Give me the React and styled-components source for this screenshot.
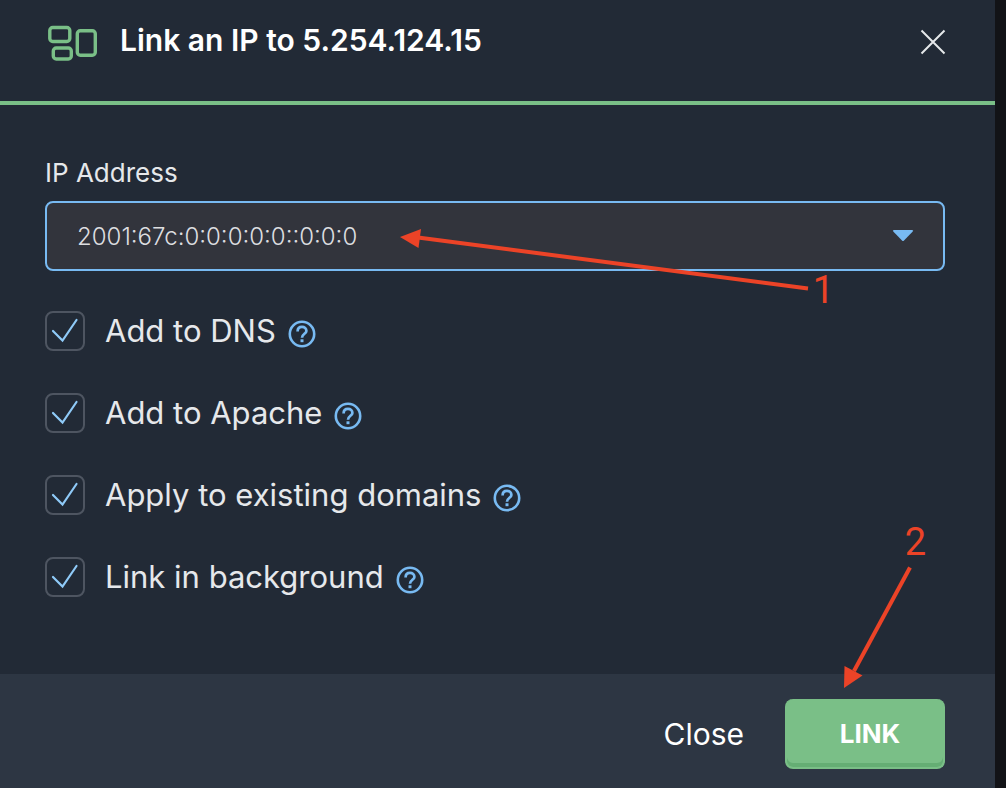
import React from 'react';
import styled, {createGlobalStyle} from 'styled-components';


const GlobalStyle = createGlobalStyle`
  :root {
    --mainDark: #222a36;
    --footerDark: #2d3643;
    --mainGreen: #7abf87;
    --darkGreen: #65ae74;
    --mainBlue: #78baf2;
    --mainText: #e6e8eb;
    --noteRed: #ec4327;
  }
  * {
    box-sizing: border-box;
  }
  body {
    margin: 0;
    background: #121317;
    color: var(--mainText);
    font-family: Inter, "Open Sans", sans-serif;
  }
  button, select {
    font-family: inherit;
  }
`;

const PageWrapper = styled.div`
  min-height: 100vh;
  padding-right: 11px;
  display: flex;
`;

const ModalWrapper = styled.section`
  flex: 1;
  display: flex;
  flex-direction: column;
  background: var(--mainDark);
`;

const ModalHeader = styled.header`
  display: flex;
  align-items: flex-start;
  padding: 20px 45px 37px 48px;
  border-bottom: 4px solid var(--mainGreen);

  h1 {
    flex: 1;
    margin: 0 0 0 22px;
    color: #fff;
    font-size: 30px;
    font-weight: 600;
    line-height: 40px;
  }
`;

const HeaderIcon = styled.svg`
  width: 50px;
  height: 44px;
  fill: none;
  stroke: var(--mainGreen);
  stroke-width: 3.400;
`;

const CloseIconButton = styled.button`
  padding: 0;
  border: 0;
  background: none;
  cursor: pointer;

  svg {
    display: block;
    width: 34px;
    height: 44px;
    stroke: #e6e8eb;
    stroke-width: 2;
  }
`;

const ModalBody = styled.div`
  flex: 1;
  padding: 52px 50px 0 45px;
`;

const FieldLabel = styled.label`
  display: block;
  margin-bottom: 12px;
  font-size: 26px;
  line-height: 32px;
`;

const SelectWrapper = styled.div`
  position: relative;
  margin-bottom: 40px;

  select {
    display: block;
    width: 100%;
    height: 70px;
    padding: 0 72px 0 30px;
    appearance: none;
    border: 2px solid var(--mainBlue);
    border-radius: 8px;
    outline: none;
    background: #32343c;
    color: #dddee0;
    font-size: 24px;
    font-weight: 300;
  }
`;

const Caret = styled.svg`
  position: absolute;
  top: 28px;
  right: 31px;
  width: 22px;
  height: 13px;
  fill: var(--mainBlue);
  pointer-events: none;
`;

const CheckList = styled.div`
  display: grid;
  gap: 42px;
`;

const CheckRow = styled.div`
  display: flex;
  align-items: center;
  height: 40px;

  label {
    display: flex;
    align-items: center;
    gap: 20px;
    font-size: 31px;
    line-height: 40px;
  }
`;

const CheckBox = styled.span`
  display: grid;
  width: 40px;
  height: 40px;

  input, svg {
    grid-area: 1 / 1;
    width: 40px;
    height: 40px;
    margin: 0;
  }
  input {
    appearance: none;
    border: 2px solid #4e5561;
    border-radius: 8px;
  }
  svg {
    fill: none;
    stroke: #8fcaf8;
    stroke-width: 2.200;
    stroke-linecap: round;
    pointer-events: none;
    visibility: hidden;
  }
  input:checked + svg {
    visibility: visible;
  }
`;

const HelpButton = styled.button`
  margin: 6px 0 0 12px;
  padding: 0;
  border: 0;
  background: none;
  cursor: pointer;

  svg {
    display: block;
    width: 28px;
    height: 28px;
    fill: none;
    stroke: var(--mainBlue);
    stroke-width: 3;
  }
`;

const ModalFooter = styled.footer`
  display: flex;
  justify-content: flex-end;
  align-items: center;
  gap: 41px;
  padding: 25px 50px 19px;
  background: var(--footerDark);
`;

const CloseButton = styled.button`
  padding: 0;
  border: 0;
  background: none;
  color: #fff;
  font-size: 30px;
  line-height: 40px;
  cursor: pointer;
`;

const LinkWrapper = styled.div`
  position: relative;
`;

const LinkButton = styled.button`
  display: block;
  width: 160px;
  height: 70px;
  padding: 0 0 0 10px;
  border: 2px solid var(--mainGreen);
  border-top: 0;
  border-radius: 8px;
  background: var(--mainGreen);
  box-shadow: inset 0 -4px 0 var(--darkGreen);
  color: #fff;
  font-size: 26px;
  font-weight: 700;
  cursor: pointer;
`;

const Note = styled.div`
  position: absolute;
  top: ${props => props.$top}px;
  right: ${props => props.$right}px;
  width: ${props => props.$width}px;
  height: ${props => props.$height}px;
  color: var(--noteRed);
  font-family: Roboto, "Liberation Sans", sans-serif;
  font-size: 38px;
  line-height: 40px;
  text-align: right;
  pointer-events: none;

  svg {
    position: absolute;
    top: 0;
    left: 0;
    width: 100%;
    height: 100%;
    fill: var(--noteRed);
    stroke: var(--noteRed);
  }
`;

const NoteNumber = styled.span`
  display: block;
  padding-top: ${props => props.$offset || 0}px;
`;

const options = [
  {id: 'dns', title: 'Add to DNS'},
  {id: 'apache', title: 'Add to Apache'},
  {id: 'domains', title: 'Apply to existing domains'},
  {id: 'background', title: 'Link in background'},
];

const CheckOption = ({id, title}) => {
  return (
    <CheckRow>
      <label htmlFor={id}>
        <CheckBox>
          <input type="checkbox" id={id} defaultChecked />
          <svg viewBox="0 0 40 40">
            <path d="M8 20L17.500 29.500L31.500 9" />
          </svg>
        </CheckBox>
        {title}
      </label>
      <HelpButton type="button" aria-label={`Help: ${title}`}>
        <svg viewBox="0 0 28 28">
          <circle cx="14" cy="14" r="12.200" strokeWidth="2.600" />
          <path d="M9.600 11.400C9.600 8.500 11.500 6.900 14 6.900C16.500 6.900 18.400 8.600 18.400 10.900C18.400 13.700 14 14 14 17.700" strokeWidth="2.700" />
          <path d="M14 19.300V22.200" />
        </svg>
      </HelpButton>
    </CheckRow>
  )
}

const App = () => {

  return (
    <>
      <GlobalStyle />
      <PageWrapper>
        <ModalWrapper role="dialog" aria-labelledby="modal-title">
          <ModalHeader>
            <HeaderIcon viewBox="0 0 50 44">
              <rect x="1.800" y="7.500" width="20" height="14" rx="3" />
              <rect x="5.300" y="28" width="18" height="11" rx="3" />
              <rect x="29.300" y="10.800" width="18" height="24.500" rx="3" />
            </HeaderIcon>
            <h1 id="modal-title">Link an IP to 5.254.124.15</h1>
            <CloseIconButton type="button" aria-label="Close dialog">
              <svg viewBox="0 0 34 44">
                <path d="M5.500 10.500L28.500 33.500M28.500 10.500L5.500 33.500" />
              </svg>
            </CloseIconButton>
          </ModalHeader>
          <ModalBody>
            <FieldLabel htmlFor="ip">IP Address</FieldLabel>
            <SelectWrapper>
              <select id="ip">
                <option>2001:67c:0:0:0:0:0::0:0:0</option>
              </select>
              <Caret viewBox="0 0 22 13">
                <path d="M2 1H20Q22 1 20.500 2.800L12 11.500Q11 12.500 10 11.500L1.500 2.800Q0 1 2 1Z" />
              </Caret>
              <Note $top={26} $right={111} $width={434} $height={82}>
                <svg viewBox="0 0 434 82">
                  <path d="M18 10.500L408 61.500" strokeWidth="4" />
                  <path d="M0 10L21 2L18.500 21Z" stroke="none" />
                </svg>
                <NoteNumber $offset={43}>1</NoteNumber>
              </Note>
            </SelectWrapper>
            <CheckList>
              {options.map(option => (
                <CheckOption key={option.id} {...option} />
              ))}
            </CheckList>
          </ModalBody>
          <ModalFooter>
            <CloseButton type="button">Close</CloseButton>
            <LinkWrapper>
              <LinkButton type="button">LINK</LinkButton>
              <Note $top={-177} $right={19} $width={82} $height={166}>
                <svg viewBox="0 0 82 166">
                  <path d="M66 45.500L10 149" strokeWidth="4" />
                  <path d="M0 166L0.500 144L18.500 153.500Z" stroke="none" />
                </svg>
                <NoteNumber>2</NoteNumber>
              </Note>
            </LinkWrapper>
          </ModalFooter>
        </ModalWrapper>
      </PageWrapper>
    </>
  )
}


export default App;
